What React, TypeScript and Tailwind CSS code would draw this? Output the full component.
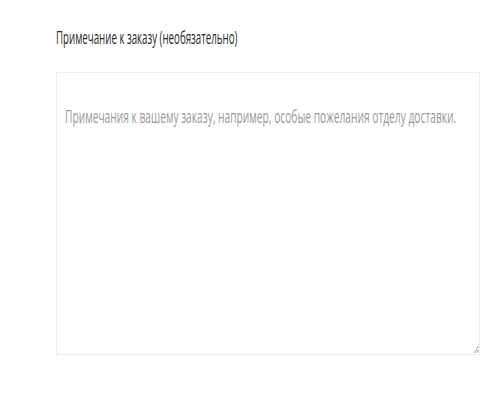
export default function App() {
  return (
    <div className="w-[500px] h-[400px] bg-white pt-[24px] pl-[56px] font-['Open_Sans',sans-serif]">
      <label htmlFor="order-notes" className="block mb-[22px] text-[18px] leading-[26px] text-[#2b2b2b] whitespace-nowrap">
        <span className="inline-block origin-left scale-x-[0.54]">Примечание к заказу (необязательно)</span>
      </label>
      {/* the shot is squeezed sideways, so the field is drawn wide and scaled back */}
      <div className="w-[424px] h-[283px] border border-[#ececec] overflow-hidden">
        <textarea
          id="order-notes"
          placeholder="Примечания к вашему заказу, например, особые пожелания отделу доставки."
          className="block w-[743px] h-full origin-left scale-x-[0.568] bg-white pl-[14px] pr-[8px] pt-[30px] text-[18px] leading-[26px] text-[#333] placeholder:text-[#9a9a9a] outline-none resize"
        />
      </div>
    </div>
  );
}
